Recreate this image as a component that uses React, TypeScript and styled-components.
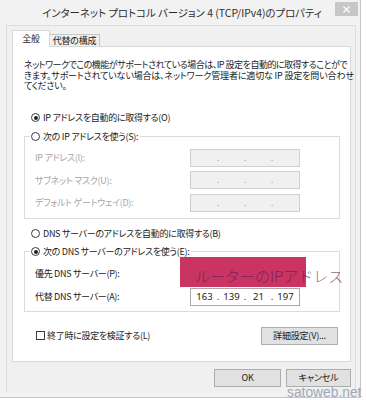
import React from "react";
import styled, { createGlobalStyle } from "styled-components";

const jp = `"Noto Sans CJK JP", "Noto Sans", sans-serif`;

const GlobalStyle = createGlobalStyle`
  html, body { margin: 0; padding: 0; background: #ffffff; }
  body { font-family: ${jp}; }
`;

const Page = styled.div`
  position: relative;
  width: 366px;
  height: 400px;
  overflow: hidden;
  background: #ffffff;
`;

const Window = styled.div`
  width: 361px;
  height: 398px;
  box-sizing: border-box;
  background: #f2f2f2;
  border-right: 1px solid #c4c4c4;
  border-bottom: 1px solid #c4c4c4;
  display: flex;
  flex-direction: column;
`;

const TitleBar = styled.div`
  height: 25px;
  display: grid;
  grid-template-columns: 1fr auto 1fr;
  align-items: start;
`;

const Title = styled.div`
  grid-column: 2;
  padding: 5px 0 0 4px;
  font-size: 10.4px;
  line-height: 16px;
  color: #2d2d2d;
  white-space: nowrap;
  font-feature-settings: "palt";
`;

const CloseButton = styled.div`
  grid-column: 3;
  justify-self: end;
  margin: 2px 2px 0 0;
  width: 23px;
  height: 14px;
  background: #c7c7c7;
  color: #ffffff;
  display: flex;
  align-items: center;
  justify-content: center;
`;

const Client = styled.div`
  flex: 1;
  margin: 0 4px 5px 6px;
  padding: 4px 4px 0 5px;
  background: #f0f0f0;
  border: 1px solid #dcdcdc;
  border-bottom: none;
  display: flex;
  flex-direction: column;
`;

const TabStrip = styled.div`
  display: flex;
  align-items: flex-end;
  margin-bottom: -1px;
  position: relative;
  z-index: 1;
`;

const Tab = styled.div<{ $active?: boolean }>`
  box-sizing: border-box;
  height: ${(p) => (p.$active ? "17px" : "13px")};
  width: ${(p) => (p.$active ? "38px" : "50px")};
  text-align: center;
  background: ${(p) => (p.$active ? "#ffffff" : "#f0f0f0")};
  border: 1px solid ${(p) => (p.$active ? "#d9d9d9" : "#c6c6c6")};
  border-bottom: ${(p) => (p.$active ? "none" : "1px solid #d9d9d9")};
  ${(p) => (p.$active ? "" : "border-left: none;")}
  font-size: 9px;
  letter-spacing: -0.2px;
  line-height: ${(p) => (p.$active ? "15px" : "11px")};
  color: #1a1a1a;
  white-space: nowrap;
  font-feature-settings: "palt";
`;

const Panel = styled.div`
  box-sizing: border-box;
  width: 339px;
  height: 316px;
  background: #ffffff;
  border: 1px solid #d9d9d9;
  padding: 13px 10px 0 11px;
  display: flex;
  flex-direction: column;
  font-size: 9px;
  letter-spacing: -0.3px;
  color: #1a1a1a;
  font-feature-settings: "palt";
`;

const Description = styled.p`
  margin: 0;
  line-height: 10.5px;
  white-space: nowrap;
`;

const DescLine = styled.span<{ $ls: number }>`
  letter-spacing: ${(p) => p.$ls}px;
`;

const RadioRow = styled.label<{ $mt: number }>`
  display: flex;
  align-items: center;
  gap: 3px;
  height: 12px;
  margin: ${(p) => p.$mt}px 0 0 7px;
  white-space: nowrap;
`;

const RadioDot = styled.span<{ $on?: boolean }>`
  box-sizing: border-box;
  width: 9px;
  height: 9px;
  border-radius: 50%;
  border: 1px solid #3c3c3c;
  background: #ffffff;
  display: flex;
  align-items: center;
  justify-content: center;
  &::after {
    content: "";
    width: 4px;
    height: 4px;
    border-radius: 50%;
    background: ${(p) => (p.$on ? "#1f1f1f" : "transparent")};
  }
`;

const Group = styled.fieldset<{ $mt: number; $pb: number }>`
  margin: ${(p) => p.$mt}px 0 0 0;
  padding: 0 0 ${(p) => p.$pb}px 0;
  border: 1px solid #dcdcdc;
  min-width: 0;
`;

const Legend = styled.legend`
  margin-left: 5px;
  padding: 0 2px 0 1px;
  display: flex;
  align-items: center;
  gap: 3px;
  height: 12px;
  white-space: nowrap;
`;

const Rows = styled.div<{ $mt: number; $gap: number }>`
  margin-top: ${(p) => p.$mt}px;
  display: grid;
  grid-template-columns: 155px 110px;
  row-gap: ${(p) => p.$gap}px;
  padding-left: 10px;
  align-items: center;
`;

const FieldLabel = styled.span<{ $disabled?: boolean }>`
  color: ${(p) => (p.$disabled ? "#a6a6a6" : "#1a1a1a")};
  white-space: nowrap;
`;

const IpBox = styled.div<{ $disabled?: boolean }>`
  box-sizing: border-box;
  height: 18px;
  border: 1px solid ${(p) => (p.$disabled ? "#cfcfcf" : "#a9a9a9")};
  background: ${(p) => (p.$disabled ? "#f0f0f0" : "#ffffff")};
  display: grid;
  grid-template-columns: 1fr 0 1fr 0 1fr 0 1fr;
  align-items: center;
  font-family: "Noto Sans", "Liberation Sans", sans-serif;
  font-size: 9.5px;
  letter-spacing: 0;
  color: ${(p) => (p.$disabled ? "#9a9a9a" : "#1a1a1a")};
`;

const Octet = styled.span`
  text-align: center;
  line-height: 16px;
`;

const Dot = styled.span`
  display: flex;
  justify-content: center;
  line-height: 16px;
`;

const BottomRow = styled.div`
  margin-top: 15px;
  display: flex;
  align-items: center;
  justify-content: space-between;
  padding: 0 2px 0 12px;
`;

const CheckRow = styled.label`
  display: flex;
  align-items: center;
  gap: 2px;
  white-space: nowrap;
`;

const CheckBox = styled.span`
  box-sizing: border-box;
  width: 9px;
  height: 9px;
  border: 1px solid #3c3c3c;
  background: #ffffff;
`;

const Button = styled.button<{ $w: number }>`
  box-sizing: border-box;
  width: ${(p) => p.$w}px;
  height: 18px;
  padding: 0;
  background: #e1e1e1;
  border: 1px solid #adadad;
  border-radius: 0;
  font-family: ${jp};
  font-size: 9px;
  letter-spacing: -0.2px;
  line-height: 16px;
  color: #1a1a1a;
  font-feature-settings: "palt";
`;

const ButtonBar = styled.div`
  margin-top: 7px;
  display: flex;
  justify-content: flex-end;
  gap: 5px;
`;

const Annotation = styled.div`
  position: absolute;
  left: 180px;
  top: 257px;
  width: 126px;
  height: 30px;
  background: #c93462;
  overflow: visible;
`;

const AnnotationText = styled.span`
  position: absolute;
  left: 15px;
  top: 10px;
  font-size: 15px;
  line-height: 18px;
  font-weight: 300;
  white-space: nowrap;
  color: rgba(90, 20, 90, 0.7);
`;

const Watermark = styled.div`
  position: absolute;
  left: 287px;
  top: 385px;
  font-family: "Liberation Sans", Arial, sans-serif;
  font-size: 13.8px;
  line-height: 16px;
  color: #9fa9b7;
  white-space: nowrap;
`;

function IpField({ values, disabled }: { values?: string[]; disabled?: boolean }) {
  const v = values ?? ["", "", "", ""];
  return (
    <IpBox $disabled={disabled}>
      <Octet>{v[0]}</Octet>
      <Dot>.</Dot>
      <Octet>{v[1]}</Octet>
      <Dot>.</Dot>
      <Octet>{v[2]}</Octet>
      <Dot>.</Dot>
      <Octet>{v[3]}</Octet>
    </IpBox>
  );
}

export default function App() {
  return (
    <Page>
      <GlobalStyle />
      <Window>
        <TitleBar>
          <Title>インターネット プロトコル バージョン 4 (TCP/IPv4)のプロパティ</Title>
          <CloseButton>
            <svg width="7" height="7" viewBox="0 0 7 7">
              <path d="M0.5 0.5 L6.5 6.5 M6.5 0.5 L0.5 6.5" stroke="#ffffff" strokeWidth="1.3" />
            </svg>
          </CloseButton>
        </TitleBar>
        <Client>
          <TabStrip>
            <Tab $active>全般</Tab>
            <Tab>代替の構成</Tab>
          </TabStrip>
          <Panel>
            <Description>
              <DescLine $ls={-0.5}>
                ネットワークでこの機能がサポートされている場合は、IP 設定を自動的に取得することがで
              </DescLine>
              <br />
              <DescLine $ls={-0.15}>
                きます。サポートされていない場合は、ネットワーク管理者に適切な IP 設定を問い合わせ
              </DescLine>
              <br />
              てください。
            </Description>
            <RadioRow $mt={20}>
              <RadioDot $on />
              IP アドレスを自動的に取得する(O)
            </RadioRow>
            <Group $mt={7} $pb={6}>
              <Legend>
                <RadioDot />
                次の IP アドレスを使う(S):
              </Legend>
              <Rows $mt={6} $gap={4.5}>
                <FieldLabel $disabled>IP アドレス(I):</FieldLabel>
                <IpField disabled />
                <FieldLabel $disabled>サブネット マスク(U):</FieldLabel>
                <IpField disabled />
                <FieldLabel $disabled>デフォルト ゲートウェイ(D):</FieldLabel>
                <IpField disabled />
              </Rows>
            </Group>
            <RadioRow $mt={9}>
              <RadioDot />
              DNS サーバーのアドレスを自動的に取得する(B)
            </RadioRow>
            <Group $mt={6} $pb={5}>
              <Legend>
                <RadioDot $on />
                次の DNS サーバーのアドレスを使う(E):
              </Legend>
              <Rows $mt={7} $gap={5}>
                <FieldLabel>優先 DNS サーバー(P):</FieldLabel>
                <IpField />
                <FieldLabel>代替 DNS サーバー(A):</FieldLabel>
                <IpField values={["163", "139", "21", "197"]} />
              </Rows>
            </Group>
            <BottomRow>
              <CheckRow>
                <CheckBox />
                終了時に設定を検証する(L)
              </CheckRow>
              <Button $w={77}>詳細設定(V)...</Button>
            </BottomRow>
          </Panel>
          <ButtonBar>
            <Button $w={67}>OK</Button>
            <Button $w={65}>キャンセル</Button>
          </ButtonBar>
        </Client>
      </Window>
      <Annotation>
        <AnnotationText>ルーターのIPアドレス</AnnotationText>
      </Annotation>
      <Watermark>satoweb.net</Watermark>
    </Page>
  );
}
